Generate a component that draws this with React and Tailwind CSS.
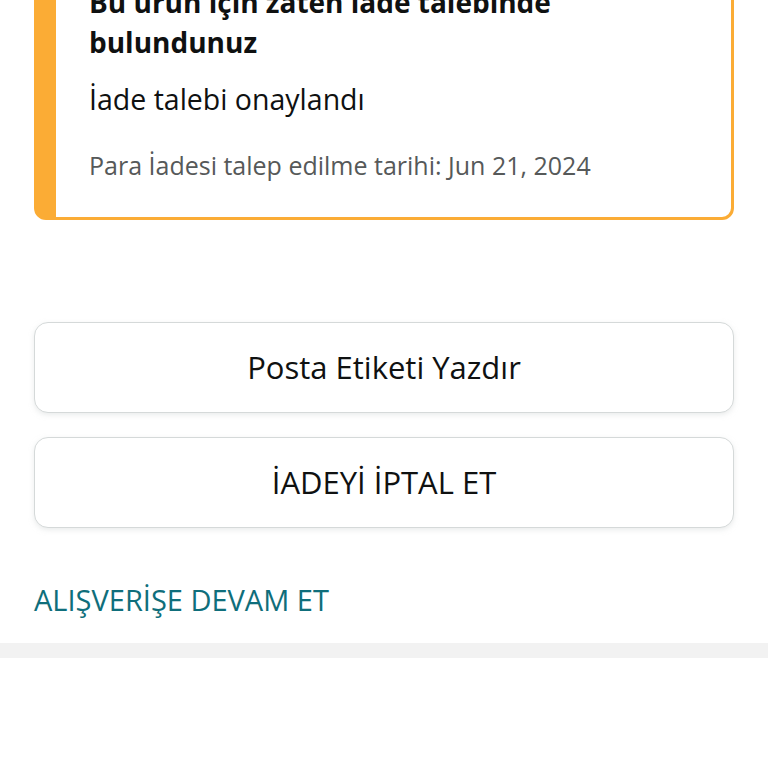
export default function App() {
  const font = { fontFamily: '"Open Sans", "Noto Sans", sans-serif' };

  return (
    <div className="w-full h-[768px] overflow-hidden bg-white" style={font}>
      {/* Alert card, top is scrolled out of view */}
      <div className="mx-[34px] -mt-[23px] rounded-[12px] border-[3px] border-l-[22px] border-[#fbac35] bg-white pl-[33px] pr-6 pt-[2px] pb-[36px]">
        <h2 className="text-[28px] leading-[40px] font-bold text-[#0f1111]">
          Bu ürün için zaten iade talebinde
          <br />
          bulundunuz
        </h2>
        <p className="mt-[19px] text-[28.5px] leading-[36px] text-[#0f1111]">İade talebi onaylandı</p>
        <p className="mt-[32px] text-[25px] leading-[32px] text-[#565959]">
          Para İadesi talep edilme tarihi: Jun 21, 2024
        </p>
      </div>

      {/* Actions */}
      <div className="mx-[34px] mt-[102px] flex flex-col gap-[24px]">
        <button className="h-[91px] w-full rounded-[14px] border border-[#d5d9d9] bg-white text-[31px] text-[#0f1111] shadow-[0_2px_5px_rgba(213,217,217,0.5)]">
          Posta Etiketi Yazdır
        </button>
        <button className="h-[91px] w-full rounded-[14px] border border-[#d5d9d9] bg-white text-[31px] text-[#0f1111] shadow-[0_2px_5px_rgba(213,217,217,0.5)]">
          İADEYİ İPTAL ET
        </button>
      </div>

      <div className="mx-[34px] mt-[52px] h-[40px] flex items-center">
        <a className="text-[29px] text-[#0f6e7b]">ALIŞVERİŞE DEVAM ET</a>
      </div>

      <div className="mt-[23px] h-[15px] bg-[#f2f2f2]" />
    </div>
  );
}
